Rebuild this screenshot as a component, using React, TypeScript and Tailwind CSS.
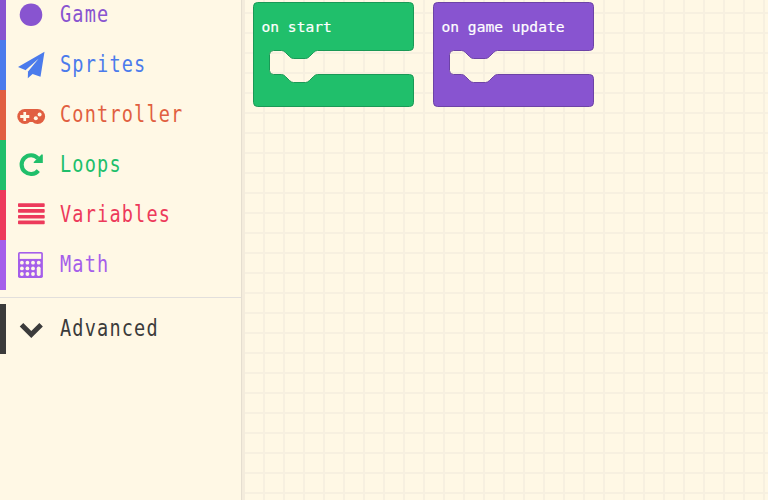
import React from "react";

type Category = { name: string; bar: string; text: string; icon: React.ReactNode };

const Icon = ({ children }: { children: React.ReactNode }) => (
  <svg viewBox="0 0 30 30" className="h-[30px] w-[30px] shrink-0" fill="currentColor">
    {children}
  </svg>
);

const categories: Category[] = [
  { name: "Game", bar: "bg-[#8854d0]", text: "text-[#8854d0]", icon: <Icon><circle cx="15" cy="14.8" r="11.3" /></Icon> },
  {
    name: "Sprites", bar: "bg-[#4b7bec]", text: "text-[#4b7bec]",
    icon: (
      <Icon>
        <path d="M28.5 1.8 L2 16.9 L9.2 20 L12 21.4 L11.8 28.3 L16.6 24 L24.5 26.7 Z" />
        <path d="M9.2 20.6 L22.5 8.8 L11.9 21.8 Z" fill="#fff8e5" />
      </Icon>
    ),
  },
  {
    name: "Controller", bar: "bg-[#e15f41]", text: "text-[#e15f41]",
    icon: (
      <Icon>
        <circle cx="8.8" cy="16.5" r="7.5" />
        <circle cx="21.6" cy="16.5" r="7.5" />
        <rect x="8.8" y="9" width="12.8" height="13" />
        <path d="M7.4 12 H10.1 V15.1 H13.3 V17.9 H10.1 V21 H7.4 V17.9 H4.2 V15.1 H7.4 Z" fill="#fff8e5" />
        <circle cx="19.8" cy="18.3" r="2" fill="#fff8e5" />
        <circle cx="23.6" cy="14.6" r="2" fill="#fff8e5" />
      </Icon>
    ),
  },
  {
    name: "Loops", bar: "bg-[#20bf6b]", text: "text-[#20bf6b]",
    icon: (
      <Icon>
        <path d="M22.3 20.6 A9.4 9.4 0 1 1 22 8.3" fill="none" stroke="currentColor" strokeWidth="4.1" />
        <path d="M26.8 4.7 V13.1 H18 L17.5 12.2 L25.8 4.2 Z" />
      </Icon>
    ),
  },
  {
    name: "Variables", bar: "bg-[#ed3a5b]", text: "text-[#ed3a5b]",
    icon: <Icon>{[3.3, 9.1, 14.9, 20.6].map((y) => <rect key={y} x="2" y={y} width="26.7" height="3.7" rx=".8" />)}</Icon>,
  },
  {
    name: "Math", bar: "bg-[#a55eea]", text: "text-[#a55eea]",
    icon: (
      <Icon>
        <rect x="2" y="1.9" width="24.9" height="26" rx="1.7" />
        <rect x="3.7" y="3.6" width="21.5" height="5.3" fill="#fff8e5" />
        {[12.7, 18.4, 24].map((y) => [5.9, 11.4, 17, 22.7].map((x) =>
          x > 20 && y > 13 ? null : <circle key={`${x}-${y}`} cx={x} cy={y} r="1.9" fill="#fff8e5" />
        ))}
        <rect x="20.8" y="16.4" width="3.8" height="9.6" rx="1.8" fill="#fff8e5" />
      </Icon>
    ),
  },
];

const advanced: Category = {
  name: "Advanced", bar: "bg-[#3b3b3b]", text: "text-[#3b3b3b]",
  icon: <Icon><path d="M5.5 10.8 L15.3 20.5 L25.1 10.8" fill="none" stroke="currentColor" strokeWidth="5" /></Icon>,
};

const CategoryRow = ({ item }: { item: Category }) => (
  <div className={`flex h-[50px] items-center ${item.text}`}>
    <div className={`mr-[10px] h-full w-[6px] shrink-0 ${item.bar}`} />
    {item.icon}
    <span className="mb-[2px] ml-[14px] origin-left scale-x-[0.78] whitespace-pre text-[23.8px] leading-[30px] tracking-[1.5px]">{item.name}</span>
  </div>
);

const EventBlock = ({ label, fill, stroke }: { label: string; fill: string; stroke: string }) => (
  <svg width="162" height="106" viewBox="0 0 162 106" className="shrink-0">
    <path
      d="M.5 4.5 Q.5 .5 4.5 .5 H156.5 Q160.5 .5 160.5 4.5 V44.5 Q160.5 48.5 156.5 48.5 H64.5 Q62.5 48.5 60.5 50.5 L56.5 54.5 Q54.5 56.5 52.5 56.5 H40.5 Q38.5 56.5 36.5 54.5 L32.5 50.5 Q30.5 48.5 28.5 48.5 H20.5 Q16.5 48.5 16.5 52.5 V68.5 Q16.5 72.5 20.5 72.5 H28.5 Q30.5 72.5 32.5 74.5 L36.5 78.5 Q38.5 80.5 40.5 80.5 H52.5 Q54.5 80.5 56.5 78.5 L60.5 74.5 Q62.5 72.5 64.5 72.5 H156.5 Q160.5 72.5 160.5 76.5 V100.5 Q160.5 104.5 156.5 104.5 H4.5 Q.5 104.5 .5 100.5 Z"
      fill={fill}
      stroke={stroke}
    />
    <text x="8.5" y="30" fill="#fff" fontSize="14.6" stroke="#fff" strokeWidth=".2">{label}</text>
  </svg>
);

export default function App() {
  return (
    <div className="flex h-[500px] w-[768px] overflow-hidden bg-[#fff8e5] font-['DejaVu_Sans_Mono',monospace]">
      <aside className="w-[241px] shrink-0">
        <div className="-mt-[10px]">
          {categories.map((item) => <CategoryRow key={item.name} item={item} />)}
        </div>
        <div className="mt-[7px] mb-[6px] h-px bg-[#e2dfdc]" />
        <CategoryRow item={advanced} />
      </aside>
      <main className="flex flex-1 border-l border-[#e5ded0] bg-[linear-gradient(to_right,#f4ecdc_3px,transparent_3px),linear-gradient(to_right,#f7f0e0_2px,transparent_2px),linear-gradient(to_bottom,#f7f0e0_2px,transparent_2px)] bg-[length:100%_100%,20px_20px,20px_20px] bg-[position:0_0,1px_0,0_12px]">
        <div className="mt-[2px] ml-[11px] flex h-[106px] gap-[18px]">
          <EventBlock label="on start" fill="#20bf6b" stroke="#1a9956" />
          <EventBlock label="on game update" fill="#8854d0" stroke="#6d43a6" />
        </div>
      </main>
    </div>
  );
}
